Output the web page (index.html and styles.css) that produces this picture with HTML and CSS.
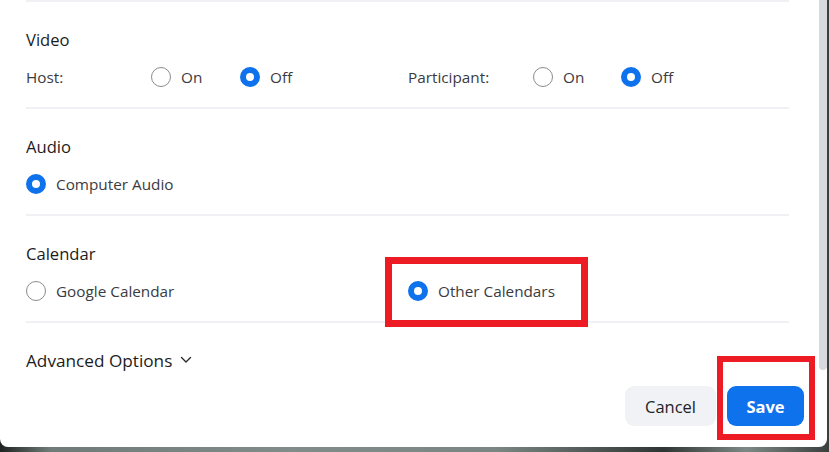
FILE: index.html
```html
<!DOCTYPE html>
<html lang="en">
<head>
<meta charset="utf-8">
<title>Meeting settings</title>
<link rel="stylesheet" href="styles.css">
</head>
<body>
<div class="backdrop">
  <div class="dialog">
    <div class="content">
      <section class="section">
        <h3 class="heading">Video</h3>
        <div class="grid-row">
          <span class="label">Host:</span>
          <label class="opt"><span class="radio"></span>On</label>
          <label class="opt"><span class="radio checked"></span>Off</label>
          <span class="label">Participant:</span>
          <label class="opt"><span class="radio"></span>On</label>
          <label class="opt"><span class="radio checked"></span>Off</label>
        </div>
      </section>
      <section class="section">
        <h3 class="heading">Audio</h3>
        <div class="row">
          <label class="opt"><span class="radio checked"></span>Computer Audio</label>
        </div>
      </section>
      <section class="section">
        <h3 class="heading">Calendar</h3>
        <div class="cal-row">
          <label class="opt"><span class="radio"></span>Google Calendar</label>
          <label class="opt highlight-wrap"><span class="radio checked"></span>Other Calendars<span class="mark mark-other"></span></label>
        </div>
      </section>
      <section class="section last">
        <button class="advanced">Advanced Options
          <svg class="chev" width="12" height="8" viewBox="0 0 12 8"><path d="M1.5 1.5 L6 6 L10.5 1.5" fill="none" stroke="#2a2a2a" stroke-width="1.4" stroke-linecap="round" stroke-linejoin="round"/></svg>
        </button>
      </section>
    </div>
    <div class="footer">
      <button class="btn cancel">Cancel</button>
      <button class="btn save">Save<span class="mark mark-save"></span></button>
    </div>
    <div class="thumb"></div>
  </div>
</div>
</body>
</html>
```

FILE: styles.css
```css
* { box-sizing: border-box; }
html, body { margin: 0; padding: 0; }
body {
  width: 829px;
  height: 452px;
  overflow: hidden;
  font-family: "Open Sans", "Noto Sans", sans-serif;
  background: linear-gradient(90deg, #1f2322 0%, #6f7b78 6%, #808c89 35%, #7a8683 60%, #2f3534 80%, #7d8986 90%, #3a3f3e 100%);
}
.backdrop { width: 829px; height: 452px; }
.dialog {
  position: relative;
  width: 827px;
  height: 447px;
  background: #ffffff;
  border-radius: 0 0 8px 8px;
}
.content { padding-left: 26px; width: 789px; }
.section {
  border-top: 2px solid #f0f1f5;
  padding: 27px 0 18px;
}
.section.last { padding-bottom: 0; }
.heading {
  margin: 0 0 14px;
  font-size: 16.6px;
  line-height: 22px;
  font-weight: 500;
  color: #1c1c1e;
}
.grid-row {
  display: grid;
  grid-template-columns: 125px 89px 168px 125px 88px auto;
  align-items: center;
  height: 24px;
}
.row, .cal-row { display: flex; align-items: center; height: 24px; }
.cal-row { display: grid; grid-template-columns: 382px auto; }
.label, .opt {
  font-size: 15.3px;
  color: #3b3b3f;
  line-height: 24px;
}
.opt { display: flex; align-items: center; gap: 10px; position: relative; }
.radio {
  width: 20px;
  height: 20px;
  border-radius: 50%;
  border: 1px solid #8c8c8f;
  background: #fff;
  flex: none;
}
.radio.checked { border: 6px solid #0e72ed; }
.advanced {
  border: 0;
  background: none;
  padding: 0;
  font-family: inherit;
  font-size: 17.2px;
  line-height: 22px;
  color: #1c1c1e;
  display: flex;
  align-items: center;
  gap: 8px;
}
.chev { margin-top: -2px; }
.footer {
  display: flex;
  justify-content: flex-end;
  gap: 11px;
  padding-right: 23px;
  margin-top: 14px;
}
.btn {
  position: relative;
  height: 40px;
  border: 0;
  border-radius: 9px;
  font-family: inherit;
  font-size: 16.5px;
}
.cancel { width: 91px; background: #f1f2f6; color: #222226; }
.save { width: 77px; background: #0e72ed; color: #fff; font-weight: 700; }
.mark { position: absolute; border: 7px solid #ed1c24; pointer-events: none; }
.mark-other { left: -23px; top: -22px; width: 203px; height: 70px; }
.mark-save { left: -10px; top: -30px; width: 98px; height: 84px; border-width: 6px; }
.thumb {
  position: absolute;
  right: 0;
  top: 0;
  width: 8px;
  height: 370px;
  background: #d9dadd;
  border-radius: 0 0 4px 4px;
}
```
